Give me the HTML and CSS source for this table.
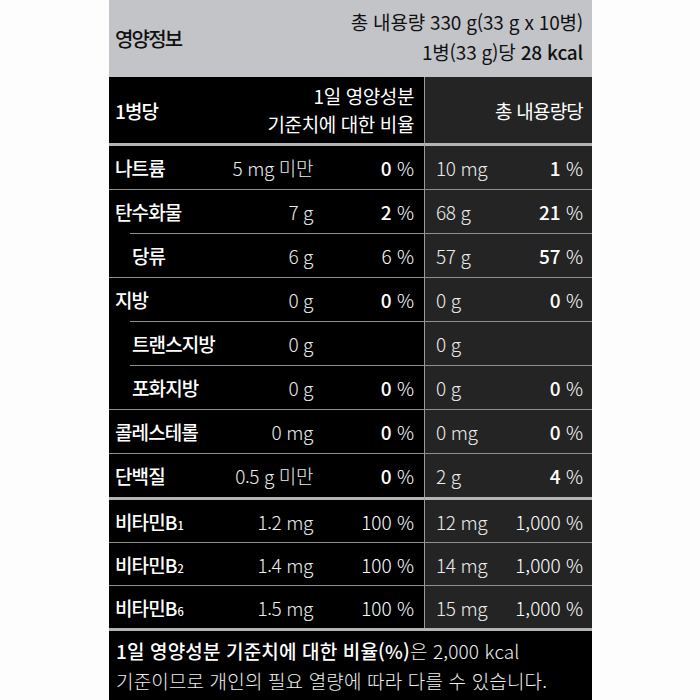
FILE: index.html
```html
<!DOCTYPE html>
<html lang="ko">
<head>
<meta charset="utf-8">
<link rel="stylesheet" href="styles.css">
</head>
<body>
<div class="label">
  <div class="top">
    <div class="title">영양정보</div>
    <div class="totals">
      <div>총 내용량 330 g(33 g x 10병)</div>
      <div>1병(33 g)당 <b>28 kcal</b></div>
    </div>
  </div>

  <div class="row head">
    <div class="lc">
      <div class="name">1병당</div>
      <div class="ratio">1일 영양성분<br>기준치에 대한 비율</div>
    </div>
    <div class="rc head-rc">총 내용량당</div>
  </div>

  <div class="row first">
    <div class="lc"><div class="name">나트륨</div><div class="amt">5 mg 미만</div><div class="pct">0 <i>%</i></div></div>
    <div class="rc"><div class="amt">10 mg</div><div class="pct">1 <i>%</i></div></div>
  </div>
  <div class="row">
    <div class="lc"><div class="name">탄수화물</div><div class="amt">7 g</div><div class="pct">2 <i>%</i></div></div>
    <div class="rc"><div class="amt">68 g</div><div class="pct">21 <i>%</i></div></div>
  </div>
  <div class="row sub">
    <div class="lc"><div class="name">당류</div><div class="amt">6 g</div><div class="pct light">6 <i>%</i></div></div>
    <div class="rc"><div class="amt">57 g</div><div class="pct">57 <i>%</i></div></div>
  </div>
  <div class="row">
    <div class="lc"><div class="name">지방</div><div class="amt">0 g</div><div class="pct">0 <i>%</i></div></div>
    <div class="rc"><div class="amt">0 g</div><div class="pct">0 <i>%</i></div></div>
  </div>
  <div class="row sub">
    <div class="lc"><div class="name">트랜스지방</div><div class="amt">0 g</div><div class="pct"></div></div>
    <div class="rc"><div class="amt">0 g</div><div class="pct"></div></div>
  </div>
  <div class="row sub">
    <div class="lc"><div class="name">포화지방</div><div class="amt">0 g</div><div class="pct">0 <i>%</i></div></div>
    <div class="rc"><div class="amt">0 g</div><div class="pct">0 <i>%</i></div></div>
  </div>
  <div class="row">
    <div class="lc"><div class="name">콜레스테롤</div><div class="amt">0 mg</div><div class="pct">0 <i>%</i></div></div>
    <div class="rc"><div class="amt">0 mg</div><div class="pct">0 <i>%</i></div></div>
  </div>
  <div class="row">
    <div class="lc"><div class="name">단백질</div><div class="amt">0.5 g 미만</div><div class="pct">0 <i>%</i></div></div>
    <div class="rc"><div class="amt">2 g</div><div class="pct">4 <i>%</i></div></div>
  </div>

  <div class="row first vit">
    <div class="lc"><div class="name">비타민B<sub>1</sub></div><div class="amt">1.2 mg</div><div class="pct light">100 <i>%</i></div></div>
    <div class="rc"><div class="amt">12 mg</div><div class="pct light">1,000 <i>%</i></div></div>
  </div>
  <div class="row vit">
    <div class="lc"><div class="name">비타민B<sub>2</sub></div><div class="amt">1.4 mg</div><div class="pct light">100 <i>%</i></div></div>
    <div class="rc"><div class="amt">14 mg</div><div class="pct light">1,000 <i>%</i></div></div>
  </div>
  <div class="row vit">
    <div class="lc"><div class="name">비타민B<sub>6</sub></div><div class="amt">1.5 mg</div><div class="pct light">100 <i>%</i></div></div>
    <div class="rc"><div class="amt">15 mg</div><div class="pct light">1,000 <i>%</i></div></div>
  </div>

  <div class="foot">
    <b>1일 영양성분 기준치에 대한 비율(%)</b>은 2,000 kcal<br>
    기준이므로 개인의 필요 열량에 따라 다를 수 있습니다.
  </div>
</div>
</body>
</html>
```

FILE: styles.css
```css
html, body {
  margin: 0;
  padding: 0;
  background: #fdfdfd;
}
body {
  font-family: "Noto Sans CJK KR", "Noto Sans", sans-serif;
  font-size: 19px;
  color: #fff;
}
.label {
  width: 483px;
  margin-left: 109px;
  height: 700px;
  background: #000;
  overflow: hidden;
}
.top {
  height: 77px;
  background: #c3c4c8;
  color: #111;
  display: flex;
  justify-content: space-between;
  align-items: center;
  padding: 0 9px 4px 6px;
  box-sizing: border-box;
}
.title {
  font-weight: 500;
  font-size: 20px;
  letter-spacing: -1.8px;
  padding-top: 4px;
}
.totals {
  text-align: right;
  line-height: 30px;
  font-weight: 400;
  letter-spacing: -0.2px;
}
.totals b {
  font-weight: 500;
}
.row {
  display: grid;
  grid-template-columns: 315px 168px;
  height: 44px;
}
.lc {
  display: grid;
  grid-template-columns: 108px 90px 101px;
  align-items: center;
  padding-left: 6px;
  background: #000;
  border-top: 1px solid #8e8e8e;
}
.rc {
  display: flex;
  justify-content: space-between;
  align-items: center;
  padding: 0 9px 0 11px;
  background: #242424;
  border-left: 1px solid #9a9a9a;
  border-top: 1px solid #8e8e8e;
}
.row.first .lc, .row.first .rc {
  border-top: 3px solid #b4b4b4;
}
.row.first {
  height: 46px;
}
.row.sub .lc {
  border-top: none;
  padding-top: 1px;
  background: linear-gradient(#8e8e8e, #8e8e8e) no-repeat 21px 0 / calc(100% - 21px) 1px, #000;
}
.row.vit {
  height: 43px;
}
.row.first.vit {
  height: 45px;
}
.row.head {
  height: 66px;
}
.row.head .lc, .row.head .rc {
  border-top: none;
}
.head .lc {
  grid-template-columns: 100px 199px;
}
.ratio {
  text-align: right;
  line-height: 28px;
  font-weight: 400;
  letter-spacing: -0.4px;
}
.head-rc {
  justify-content: flex-end;
  font-weight: 400;
  letter-spacing: -0.8px;
}
.name {
  font-weight: 500;
  letter-spacing: -0.9px;
  white-space: nowrap;
}
.sub .name {
  padding-left: 17px;
}
.amt {
  text-align: right;
  font-weight: 300;
  color: #ececec;
  white-space: nowrap;
  letter-spacing: -0.4px;
}
.rc .amt {
  text-align: left;
}
.pct {
  text-align: right;
  font-weight: 500;
  white-space: nowrap;
}
.pct.light {
  font-weight: 300;
}
.pct i {
  font-style: normal;
  font-weight: 300;
}
sub {
  font-size: 11px;
  vertical-align: baseline;
  letter-spacing: 0;
  margin-left: 1px;
}
.foot {
  border-top: 3px solid #b4b4b4;
  padding: 5px 8px 0 7px;
  line-height: 30px;
  font-weight: 300;
  color: #f0f0f0;
  letter-spacing: 0.15px;
}
.foot b {
  font-weight: 500;
  color: #fff;
}
```
